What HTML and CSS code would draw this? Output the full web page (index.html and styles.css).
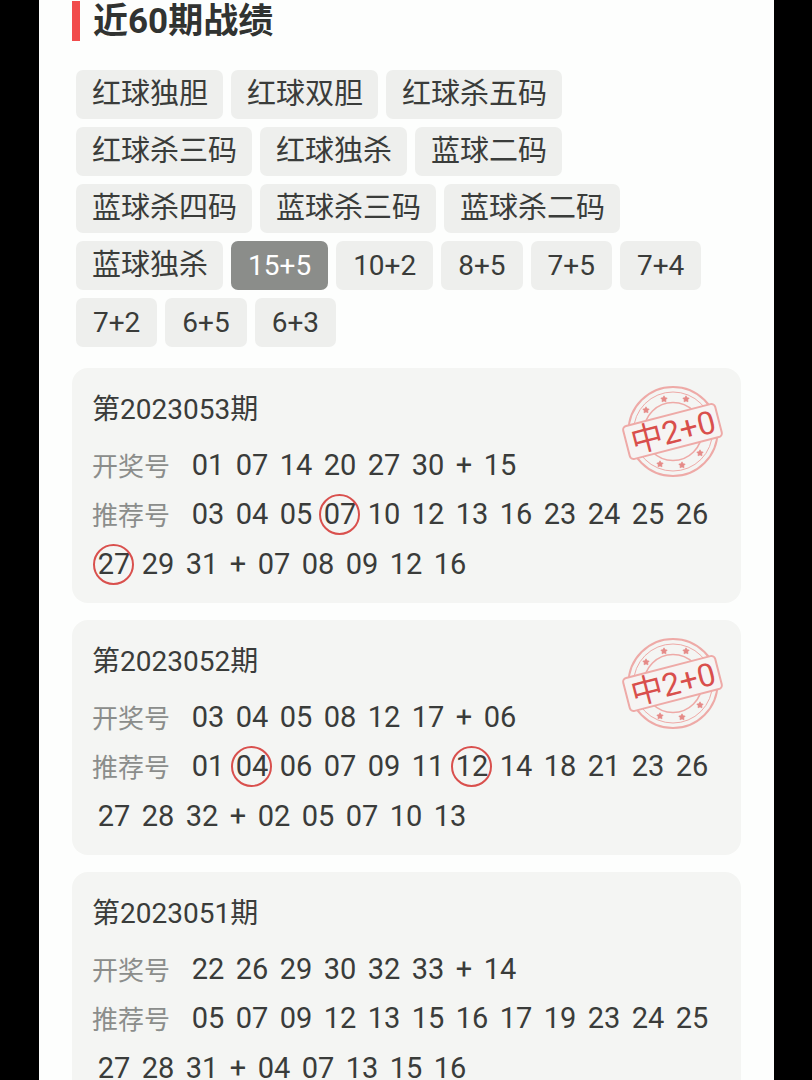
FILE: index.html
```
<!DOCTYPE html>
<html lang="zh-CN">
<head>
  <meta charset="UTF-8" />
  <meta name="viewport" content="width=device-width, initial-scale=1.0"/>
  <title>近60期战绩</title>
  <link rel="stylesheet" href="styles.css">
</head>
<body>

  <!-- Stamp shared by the winning cards -->
  <svg class="defs" width="0" height="0" aria-hidden="true">
    <defs>
      <path id="star" d="M0 -3.2 L1.2 -1.3 L3.2 -0.9 L1.8 0.7 L2 2.8 L0 2 L-2 2.8 L-1.8 0.7 L-3.2 -0.9 L-1.2 -1.3 Z"/>
      <g id="stamp-frame" fill="none" stroke="#eeaaa7">
        <circle cx="53" cy="47.5" r="44.5" stroke-width="2"/>
        <circle cx="53" cy="47.5" r="39.5" stroke-width="1"/>
        <circle cx="53" cy="47.5" r="29" stroke-width="1.6"/>
        <g fill="#e58a87" stroke="#e58a87" stroke-width="0.6">
          <use href="#star" x="26" y="26"/>
          <use href="#star" x="44" y="15"/>
          <use href="#star" x="66" y="15"/>
          <use href="#star" x="40" y="80"/>
          <use href="#star" x="62" y="81"/>
          <use href="#star" x="80" y="69"/>
        </g>
        <rect x="5" y="30.5" width="95" height="34" rx="4" fill="#f6f4f3" stroke-width="2" transform="rotate(-14.5 52.5 47.5)"/>
      </g>
    </defs>
  </svg>

  <main class="page">
    <h2 class="title">近60期战绩</h2>

    <div class="tabs">
      <button class="tab">红球独胆</button>
      <button class="tab">红球双胆</button>
      <button class="tab">红球杀五码</button>
      <button class="tab">红球杀三码</button>
      <button class="tab">红球独杀</button>
      <button class="tab">蓝球二码</button>
      <button class="tab">蓝球杀四码</button>
      <button class="tab">蓝球杀三码</button>
      <button class="tab">蓝球杀二码</button>
      <button class="tab">蓝球独杀</button>
      <button class="tab combo active">15+5</button>
      <button class="tab combo">10+2</button>
      <button class="tab combo">8+5</button>
      <button class="tab combo">7+5</button>
      <button class="tab combo">7+4</button>
      <button class="tab combo">7+2</button>
      <button class="tab combo">6+5</button>
      <button class="tab combo">6+3</button>
    </div>

    <section class="card">
      <h3>第2023053期</h3>
      <div class="row draw">
        <span class="label">开奖号</span>
        <span class="num">01</span><span class="num">07</span><span class="num">14</span><span class="num">20</span><span class="num">27</span><span class="num">30</span><span class="plus">+</span><span class="num">15</span>
      </div>
      <div class="row">
        <span class="label">推荐号</span>
        <span class="num">03</span><span class="num">04</span><span class="num">05</span><span class="num hit">07</span><span class="num">10</span><span class="num">12</span><span class="num">13</span><span class="num">16</span><span class="num">23</span><span class="num">24</span><span class="num">25</span><span class="num">26</span>
        <span class="num hit">27</span><span class="num">29</span><span class="num">31</span><span class="plus">+</span><span class="num">07</span><span class="num">08</span><span class="num">09</span><span class="num">12</span><span class="num">16</span>
      </div>
      <svg class="stamp" viewBox="0 0 104 94">
        <use href="#stamp-frame"/>
        <text x="53" y="59" text-anchor="middle" transform="rotate(-14.5 52.5 47.5)">中2+0</text>
      </svg>
    </section>

    <section class="card">
      <h3>第2023052期</h3>
      <div class="row draw">
        <span class="label">开奖号</span>
        <span class="num">03</span><span class="num">04</span><span class="num">05</span><span class="num">08</span><span class="num">12</span><span class="num">17</span><span class="plus">+</span><span class="num">06</span>
      </div>
      <div class="row">
        <span class="label">推荐号</span>
        <span class="num">01</span><span class="num hit">04</span><span class="num">06</span><span class="num">07</span><span class="num">09</span><span class="num">11</span><span class="num hit">12</span><span class="num">14</span><span class="num">18</span><span class="num">21</span><span class="num">23</span><span class="num">26</span>
        <span class="num">27</span><span class="num">28</span><span class="num">32</span><span class="plus">+</span><span class="num">02</span><span class="num">05</span><span class="num">07</span><span class="num">10</span><span class="num">13</span>
      </div>
      <svg class="stamp" viewBox="0 0 104 94">
        <use href="#stamp-frame"/>
        <text x="53" y="59" text-anchor="middle" transform="rotate(-14.5 52.5 47.5)">中2+0</text>
      </svg>
    </section>

    <section class="card">
      <h3>第2023051期</h3>
      <div class="row draw">
        <span class="label">开奖号</span>
        <span class="num">22</span><span class="num">26</span><span class="num">29</span><span class="num">30</span><span class="num">32</span><span class="num">33</span><span class="plus">+</span><span class="num">14</span>
      </div>
      <div class="row">
        <span class="label">推荐号</span>
        <span class="num">05</span><span class="num">07</span><span class="num">09</span><span class="num">12</span><span class="num">13</span><span class="num">15</span><span class="num">16</span><span class="num">17</span><span class="num">19</span><span class="num">23</span><span class="num">24</span><span class="num">25</span>
        <span class="num">27</span><span class="num">28</span><span class="num">31</span><span class="plus">+</span><span class="num">04</span><span class="num">07</span><span class="num">13</span><span class="num">15</span><span class="num">16</span>
      </div>
    </section>
  </main>

</body>
</html>
```
FILE: styles.css
```
*,
*::after {
  box-sizing: border-box;
}

html {
  scrollbar-width: none;
}

body {
  margin: 0;
  padding: 0 38px 0 39px;
  background: #000;
  color: #3a3c3a;
  font-family: Roboto, "Noto Sans CJK SC", sans-serif;
}

.defs {
  position: absolute;
}

.page {
  min-height: 100vh;
  padding: 1px 33px;
  background: #fdfefd;
}

.title {
  height: 40px;
  margin: 0 0 29px;
  padding-left: 13px;
  border-left: 8px solid #f14c4c;
  font-size: 35px;
  line-height: 42px;
  font-weight: bold;
  color: #313331;
}

.tabs {
  display: flex;
  flex-wrap: wrap;
  gap: 8px;
  padding: 0 30px 0 4px;
  margin-bottom: 21px;
}

.tab {
  height: 49px;
  padding: 0 15px 0 16px;
  border: none;
  border-radius: 7px;
  background: #eeefed;
  color: #3a3c3a;
  font-family: inherit;
  font-size: 29px;
  line-height: 49px;
  cursor: pointer;
}

.tab.combo {
  padding: 0 17px;
  font-size: 28px;
}

.tab.active {
  background: #8b8d8a;
  color: #fff;
}

.card {
  position: relative;
  margin-bottom: 17px;
  padding: 20px 20px 13px;
  border-radius: 16px;
  background: #f4f5f3;
}

.card h3 {
  margin: 0 0 9px;
  font-size: 28px;
  line-height: 44px;
  font-weight: normal;
}

.row {
  display: flex;
  flex-wrap: wrap;
  align-items: flex-start;
  font-size: 29px;
  line-height: 48px;
}

.label {
  width: 94px;
  height: 48px;
  font-size: 26px;
  line-height: 52px;
  color: #8b8d8b;
}

.num,
.plus {
  position: relative;
  width: 44px;
  height: 50px;
  text-align: center;
}

.plus {
  width: 28px;
}

.draw .num,
.draw .plus {
  height: 49px;
}

/* red ring around a matched number */
.hit::after {
  content: "";
  position: absolute;
  top: 4px;
  left: 1px;
  width: 41px;
  height: 41px;
  border: 2px solid #d9504d;
  border-radius: 50%;
}

.stamp {
  position: absolute;
  top: 16px;
  right: 17px;
  width: 104px;
  height: 94px;
}

.stamp text {
  font-size: 32px;
  fill: #d94f4c;
}
```
